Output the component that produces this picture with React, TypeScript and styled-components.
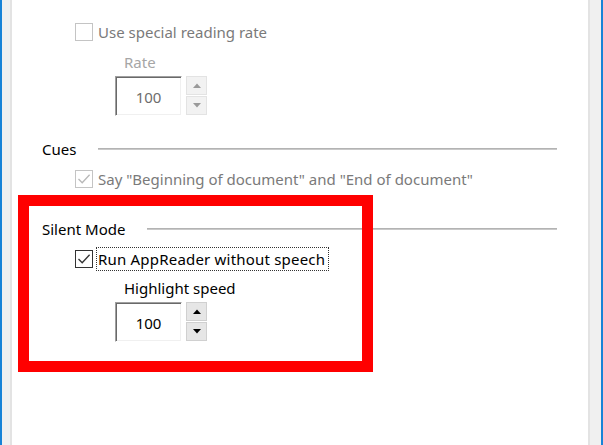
import * as React from 'react';
import styled, { createGlobalStyle } from 'styled-components';

const GlobalStyle = createGlobalStyle`
  html, body {
    margin: 0;
    padding: 0;
    background: #ffffff;
  }
  body {
    font-family: 'Noto Sans', 'Open Sans', sans-serif;
    font-size: 15px;
  }
`;

const Window = styled.div`
  width: 603px;
  height: 445px;
  display: flex;
  flex-direction: row;
  overflow: hidden;
`;

const Frame = styled.div<{ side: 'left' | 'right' }>`
  height: 100%;
  box-sizing: border-box;
  background: #f0f0f0;
  border-left: ${p => (p.side === 'left' ? '2px solid #1883d7' : '2px solid #e3e3e3')};
  border-right: ${p => (p.side === 'left' ? '2px solid #e3e3e3' : '2px solid #1883d7')};
  width: ${p => (p.side === 'left' ? '12px' : '15px')};
`;

const Content = styled.div`
  flex: 1;
  height: 100%;
  background: #ffffff;
  box-sizing: border-box;
  padding: 22px 31px 0 30px;
  display: flex;
  flex-direction: column;
`;

const Section = styled.div<{ gap: number }>`
  position: relative;
  display: flex;
  flex-direction: column;
  margin-top: ${p => p.gap}px;
`;

const Heading = styled.div`
  display: flex;
  align-items: center;
  height: 20px;
  color: #000;
  line-height: 20px;
`;

const HeadingRule = styled.div`
  flex: 1;
  height: 2px;
  margin-left: 22px;
  background: linear-gradient(#a8a8a8, #d4d4d4);
`;

const CheckRow = styled.label<{ top: number; disabled?: boolean }>`
  display: flex;
  align-items: center;
  height: 20px;
  margin-top: ${p => p.top}px;
  margin-left: 33px;
  color: ${p => (p.disabled ? '#7a7a7a' : '#000')};
  line-height: 20px;
`;

const Box = styled.span<{ disabled?: boolean }>`
  width: 18px;
  height: 18px;
  box-sizing: border-box;
  border: 1px solid ${p => (p.disabled ? '#c4c4c4' : '#333333')};
  background: #fff;
  display: flex;
  align-items: center;
  justify-content: center;
  margin-right: 5px;
`;

const FocusText = styled.span<{ focused?: boolean }>`
  padding: 0 2px 0 0;
  outline: ${p => (p.focused ? '1px dotted #333' : 'none')};
  outline-offset: 1px;
  letter-spacing: ${p => (p.focused ? '0.2px' : '0')};
`;

const Field = styled.div`
  display: flex;
  flex-direction: column;
  margin-left: 73px;
`;

const FieldLabel = styled.div<{ top: number; disabled?: boolean }>`
  margin-top: ${p => p.top}px;
  margin-left: 9px;
  height: 20px;
  line-height: 20px;
  color: ${p => (p.disabled ? '#a6a6a6' : '#000')};
`;

const Spinner = styled.div`
  display: flex;
  gap: 4px;
  margin-top: 4px;
`;

const SpinInput = styled.div<{ disabled?: boolean }>`
  width: 67px;
  height: 40px;
  box-sizing: border-box;
  border-style: solid;
  border-width: 1px;
  border-color: #a0a0a0 #ffffff #ffffff #a0a0a0;
  box-shadow: inset 1px 1px 0 #696969, inset -1px -1px 0 #f0f0f0;
  display: flex;
  align-items: center;
  justify-content: center;
  padding-top: 1px;
  color: ${p => (p.disabled ? '#6d6d6d' : '#000')};
`;

const SpinButtons = styled.div`
  display: flex;
  flex-direction: column;
  gap: 1px;
`;

const SpinButton = styled.div<{ disabled?: boolean }>`
  width: 21px;
  height: 19px;
  box-sizing: border-box;
  background: ${p => (p.disabled ? '#f2f2f2' : '#e6e6e6')};
  border: 1px solid ${p => (p.disabled ? '#e3e3e3' : '#d0d0d0')};
  display: flex;
  align-items: center;
  justify-content: center;
`;

const Highlight = styled.div`
  position: absolute;
  left: -24px;
  top: -24px;
  width: 355px;
  height: 177px;
  box-sizing: border-box;
  border: 11px solid #ff0000;
  pointer-events: none;
`;

const Check = ({ color }: { color: string }) => (
  <svg width="14" height="14" viewBox="0 0 14 14">
    <path d="M1.5 7 L5.2 10.8 L12.6 2.8" fill="none" stroke={color} strokeWidth="1.3" />
  </svg>
);

const Arrow = ({ up, color }: { up?: boolean; color: string }) => (
  <svg width="8" height="5" viewBox="0 0 8 5">
    <path d={up ? 'M0 5 L4 0.5 L8 5 Z' : 'M0 0 L8 0 L4 4.5 Z'} fill={color} />
  </svg>
);

const SpinBox = ({ value, disabled }: { value: number; disabled?: boolean }) => {
  const c = disabled ? '#9a9a9a' : '#000';
  return (
    <Spinner>
      <SpinInput disabled={disabled}>{value}</SpinInput>
      <SpinButtons>
        <SpinButton disabled={disabled}>
          <Arrow up color={c} />
        </SpinButton>
        <SpinButton disabled={disabled}>
          <Arrow color={c} />
        </SpinButton>
      </SpinButtons>
    </Spinner>
  );
};

export default function App() {
  return (
    <>
      <GlobalStyle />
      <Window>
        <Frame side="left" />
        <Content>
          <Section gap={0}>
            <CheckRow top={0} disabled>
              <Box disabled />
              <FocusText>Use special reading rate</FocusText>
            </CheckRow>
            <Field>
              <FieldLabel top={10} disabled>
                Rate
              </FieldLabel>
              <SpinBox value={100} disabled />
            </Field>
          </Section>

          <Section gap={23}>
            <Heading>
              Cues
              <HeadingRule />
            </Heading>
            <CheckRow top={10} disabled>
              <Box disabled>
                <Check color="#b8b8b8" />
              </Box>
              <FocusText>Say "Beginning of document" and "End of document"</FocusText>
            </CheckRow>
          </Section>

          <Section gap={30}>
            <Heading>
              Silent Mode
              <HeadingRule />
            </Heading>
            <CheckRow top={10}>
              <Box>
                <Check color="#333" />
              </Box>
              <FocusText focused>Run AppReader without speech</FocusText>
            </CheckRow>
            <Field>
              <FieldLabel top={9}>Highlight speed</FieldLabel>
              <SpinBox value={100} />
            </Field>
            <Highlight />
          </Section>
        </Content>
        <Frame side="right" />
      </Window>
    </>
  );
}
